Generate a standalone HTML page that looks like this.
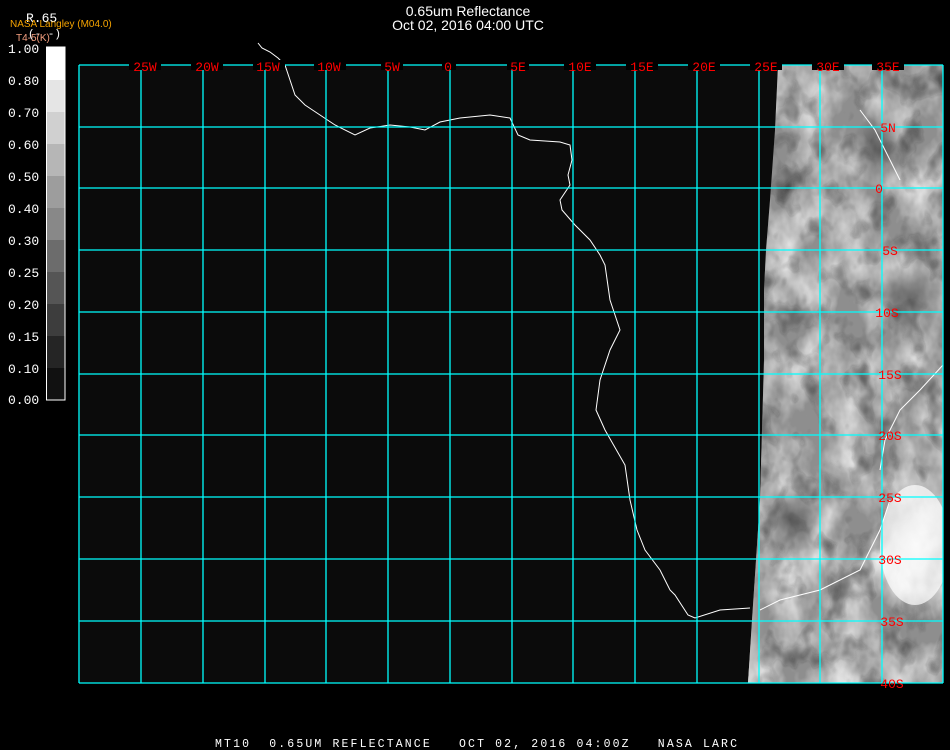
<!DOCTYPE html>
<html><head><meta charset="utf-8"><style>
html,body{margin:0;padding:0;background:#000;width:950px;height:750px;overflow:hidden}
svg{display:block}
.m{font-family:"Liberation Mono",monospace}
.s{font-family:"Liberation Sans",sans-serif}
</style></head><body>
<svg width="950" height="750" xmlns="http://www.w3.org/2000/svg">
<defs>
<radialGradient id="w" cx="50%" cy="50%" r="50%"><stop offset="0" stop-color="#fff" stop-opacity=".8"/><stop offset="1" stop-color="#fff" stop-opacity="0"/></radialGradient>
<radialGradient id="d" cx="50%" cy="50%" r="50%"><stop offset="0" stop-color="#333" stop-opacity=".7"/><stop offset="1" stop-color="#333" stop-opacity="0"/></radialGradient>
<linearGradient id="edge" x1="0" x2="1"><stop offset="0" stop-color="#eee"/><stop offset="1" stop-color="#999" stop-opacity="0"/></linearGradient>
<filter id="noise" x="0" y="0" width="100%" height="100%">
<feTurbulence type="fractalNoise" baseFrequency="0.03 0.02" numOctaves="4" seed="7" result="t"/>
<feColorMatrix in="t" type="matrix" values="0 0 0 0 0  0 0 0 0 0  0 0 0 0 0  1.5 0 0 0 -0.5" result="a"/>
<feFlood flood-color="#fff"/>
<feComposite in2="a" operator="in"/>
</filter>
<filter id="noise2" x="0" y="0" width="100%" height="100%">
<feTurbulence type="fractalNoise" baseFrequency="0.04 0.03" numOctaves="3" seed="21" result="t"/>
<feColorMatrix in="t" type="matrix" values="0 0 0 0 0  0 0 0 0 0  0 0 0 0 0  1.5 0 0 0 -0.75" result="a"/>
<feFlood flood-color="#222"/>
<feComposite in2="a" operator="in"/>
</filter>
<clipPath id="sat"><polygon points="778,65 943,65 943,683 748,683 752,620 756,560 760,500 762,430 764,360 764,290 766,250 770,200 775,130"/></clipPath>
</defs>
<rect x="79" y="65" width="864" height="618" fill="#0b0b0b"/>
<g clip-path="url(#sat)">
<rect x="740" y="65" width="210" height="618" fill="#8e8e8e"/>
<rect x="740" y="65" width="210" height="618" filter="url(#noise)"/>
<rect x="740" y="65" width="210" height="618" filter="url(#noise2)"/>
<rect x="740" y="65" width="25" height="618" fill="url(#edge)"/>
<ellipse cx="880" cy="150" rx="30" ry="35" fill="url(#d)"/>
<ellipse cx="910" cy="300" rx="30" ry="40" fill="url(#d)"/>
<ellipse cx="790" cy="520" rx="30" ry="35" fill="url(#d)"/>
<ellipse cx="915" cy="545" rx="35" ry="60" fill="#fff" opacity=".7"/>
<ellipse cx="915" cy="545" rx="45" ry="75" fill="url(#w)"/>
</g>
<g stroke="#fff" stroke-width="1" fill="none">
<polyline points="258,43 262,48 270,52 278,58 285,65 290,80 295,95 305,105 320,115 335,125 355,135 370,128 390,125 410,127 425,130 440,122 460,118 490,115 510,118 518,135 530,140 560,142 570,145 572,160 568,175 570,185 560,200 562,210 575,225 590,240 600,255 605,265 610,300 615,315 620,330 610,350 600,380 596,410 605,430 625,465 630,500 637,530 645,550 660,570 670,590 675,595 688,615 695,618 720,610 750,608"/>
<polyline points="860,110 875,130 890,160 900,180"/>
<polyline points="943,365 920,390 900,410 885,440 880,470"/>
<polyline points="890,500 880,530 860,570 820,590 780,600 760,610"/>
</g>
<g stroke="#0ff" stroke-width="1.3">
<line x1="79" y1="65" x2="943" y2="65"/>
<line x1="79" y1="127" x2="943" y2="127"/>
<line x1="79" y1="188" x2="943" y2="188"/>
<line x1="79" y1="250" x2="943" y2="250"/>
<line x1="79" y1="312" x2="943" y2="312"/>
<line x1="79" y1="374" x2="943" y2="374"/>
<line x1="79" y1="435" x2="943" y2="435"/>
<line x1="79" y1="497" x2="943" y2="497"/>
<line x1="79" y1="559" x2="943" y2="559"/>
<line x1="79" y1="621" x2="943" y2="621"/>
<line x1="79" y1="683" x2="943" y2="683"/>
<line x1="79" y1="65" x2="79" y2="683"/>
<line x1="141" y1="65" x2="141" y2="683"/>
<line x1="203" y1="65" x2="203" y2="683"/>
<line x1="265" y1="65" x2="265" y2="683"/>
<line x1="326" y1="65" x2="326" y2="683"/>
<line x1="388" y1="65" x2="388" y2="683"/>
<line x1="450" y1="65" x2="450" y2="683"/>
<line x1="512" y1="65" x2="512" y2="683"/>
<line x1="573" y1="65" x2="573" y2="683"/>
<line x1="635" y1="65" x2="635" y2="683"/>
<line x1="697" y1="65" x2="697" y2="683"/>
<line x1="759" y1="65" x2="759" y2="683"/>
<line x1="820" y1="65" x2="820" y2="683"/>
<line x1="882" y1="65" x2="882" y2="683"/>
<line x1="943" y1="65" x2="943" y2="683"/>
</g>
<g fill="#000">
<rect x="129" y="60" width="32" height="10"/><rect x="191" y="60" width="32" height="10"/><rect x="253" y="60" width="32" height="10"/><rect x="314" y="60" width="32" height="10"/><rect x="381" y="60" width="22" height="10"/><rect x="442" y="60" width="14" height="10"/><rect x="507" y="60" width="22" height="10"/><rect x="564" y="60" width="32" height="10"/><rect x="626" y="60" width="32" height="10"/><rect x="688" y="60" width="32" height="10"/><rect x="750" y="60" width="32" height="10"/><rect x="812" y="60" width="32" height="10"/><rect x="872" y="60" width="32" height="10"/>
</g>
<g fill="#f00" font-size="13" text-anchor="middle" class="m">
<text x="145" y="71">25W</text><text x="207" y="71">20W</text><text x="268" y="71">15W</text><text x="329" y="71">10W</text><text x="392" y="71">5W</text><text x="448" y="71">0</text><text x="518" y="71">5E</text><text x="580" y="71">10E</text><text x="642" y="71">15E</text><text x="704" y="71">20E</text><text x="766" y="71">25E</text><text x="828" y="71">30E</text><text x="888" y="71">35E</text>
<text x="888" y="132">5N</text><text x="879" y="193">0</text><text x="890" y="255">5S</text><text x="887" y="317">10S</text><text x="890" y="379">15S</text><text x="890" y="440">20S</text><text x="890" y="502">25S</text><text x="890" y="564">30S</text><text x="892" y="626">35S</text><text x="892" y="688">40S</text>
</g>
<g>
<rect x="46" y="47" width="19" height="33" fill="#fff"/>
<rect x="46" y="80" width="19" height="32" fill="#e5e5e5"/>
<rect x="46" y="112" width="19" height="32" fill="#d0d0d0"/>
<rect x="46" y="144" width="19" height="32" fill="#b6b6b6"/>
<rect x="46" y="176" width="19" height="32" fill="#9d9d9d"/>
<rect x="46" y="208" width="19" height="32" fill="#888"/>
<rect x="46" y="240" width="19" height="32" fill="#6c6c6c"/>
<rect x="46" y="272" width="19" height="32" fill="#555"/>
<rect x="46" y="304" width="19" height="32" fill="#3d3d3d"/>
<rect x="46" y="336" width="19" height="32" fill="#252525"/>
<rect x="46" y="368" width="19" height="32" fill="#111"/>
<rect x="46.5" y="47" width="18.5" height="353" fill="none" stroke="#fff" stroke-width="1"/>
</g>
<g fill="#fff" font-size="13" class="m">
<text x="8" y="53">1.00</text><text x="8" y="85">0.80</text><text x="8" y="117">0.70</text><text x="8" y="149">0.60</text><text x="8" y="181">0.50</text><text x="8" y="213">0.40</text><text x="8" y="245">0.30</text><text x="8" y="277">0.25</text><text x="8" y="309">0.20</text><text x="8" y="341">0.15</text><text x="8" y="373">0.10</text><text x="8" y="404">0.00</text>
<text x="26" y="22" font-size="13">R.65</text>
<text x="28" y="37" font-size="11">(- -)</text>
</g>
<text x="10" y="27" fill="#f5a300" font-size="10" class="s">NASA Langley (M04.0)</text>
<text x="16" y="41" fill="#f5a080" font-size="10" class="s">T4-5(K)</text>
<g fill="#fff" font-size="14" text-anchor="middle" class="s">
<text x="468" y="16" class="s">0.65um Reflectance</text>
<text x="468" y="30" class="s">Oct 02, 2016 04:00 UTC</text>
</g>
<text x="215" y="747" fill="#fff" font-size="11.5" class="m" xml:space="preserve" textLength="522">MT10  0.65UM REFLECTANCE   OCT 02, 2016 04:00Z   NASA LARC</text>
</svg>
</body></html>
